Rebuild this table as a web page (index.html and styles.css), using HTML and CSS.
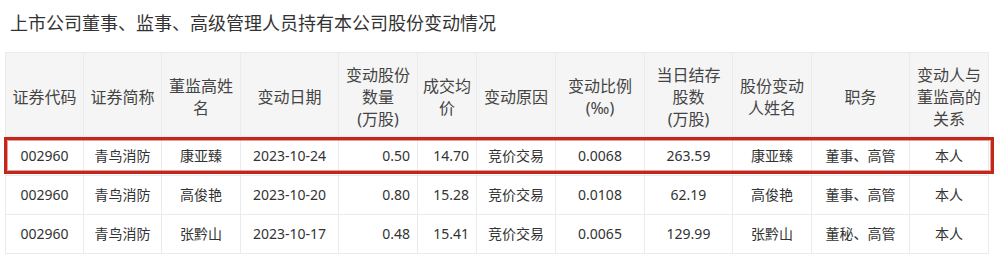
FILE: index.html
```html
<!DOCTYPE html>
<html lang="zh-CN">
<head>
<meta charset="utf-8">
<title>上市公司董事、监事、高级管理人员持有本公司股份变动情况</title>
<link rel="stylesheet" href="styles.css">
</head>
<body>
<h1 class="title">上市公司董事、监事、高级管理人员持有本公司股份变动情况</h1>
<div class="table-wrap">
  <table class="grid">
    <colgroup>
      <col style="width:78px"><col style="width:78px"><col style="width:79px"><col style="width:98px">
      <col style="width:79px"><col style="width:59px"><col style="width:79px"><col style="width:89px">
      <col style="width:88px"><col style="width:79px"><col style="width:98px"><col style="width:79px">
    </colgroup>
    <thead>
      <tr>
        <th>证券代码</th>
        <th>证券简称</th>
        <th>董监高姓<br>名</th>
        <th>变动日期</th>
        <th>变动股份<br>数量<br>(万股)</th>
        <th>成交均<br>价</th>
        <th>变动原因</th>
        <th>变动比例<br>(‰)</th>
        <th>当日结存<br>股数<br>(万股)</th>
        <th>股份变动<br>人姓名</th>
        <th>职务</th>
        <th>变动人与<br>董监高的<br>关系</th>
      </tr>
    </thead>
    <tbody>
      <tr>
        <td>002960</td><td>青鸟消防</td><td>康亚臻</td><td>2023-10-24</td>
        <td class="num">0.50</td><td class="num">14.70</td><td>竞价交易</td><td>0.0068</td>
        <td>263.59</td><td>康亚臻</td><td>董事、高管</td><td>本人</td>
      </tr>
      <tr>
        <td>002960</td><td>青鸟消防</td><td>高俊艳</td><td>2023-10-20</td>
        <td class="num">0.80</td><td class="num">15.28</td><td>竞价交易</td><td>0.0108</td>
        <td>62.19</td><td>高俊艳</td><td>董事、高管</td><td>本人</td>
      </tr>
      <tr>
        <td>002960</td><td>青鸟消防</td><td>张黔山</td><td>2023-10-17</td>
        <td class="num">0.48</td><td class="num">15.41</td><td>竞价交易</td><td>0.0065</td>
        <td>129.99</td><td>张黔山</td><td>董秘、高管</td><td>本人</td>
      </tr>
    </tbody>
  </table>
  <div class="highlight"></div>
</div>
</body>
</html>
```

FILE: styles.css
```css
html, body {
  margin: 0;
  padding: 0;
  background: #ffffff;
}

body {
  font-family: "Noto Sans", "Noto Sans CJK SC", sans-serif;
  color: #333333;
}

.title {
  margin: 0;
  padding: 11px 0 0 10px;
  height: 52px;
  box-sizing: border-box;
  font-size: 18px;
  line-height: 24px;
  font-weight: normal;
  color: #333333;
}

.table-wrap {
  position: relative;
  margin-left: 5px;
  width: 983px;
}

.grid {
  width: 983px;
  border-collapse: collapse;
  table-layout: fixed;
}

.grid th,
.grid td {
  border: 1px solid #ebebeb;
  text-align: center;
  vertical-align: middle;
}

.grid th {
  height: 84px;
  padding: 5px 4px 0;
  box-sizing: border-box;
  background: #f5f5f5;
  font-size: 16px;
  line-height: 22px;
  font-weight: normal;
  color: #444444;
}

.grid td {
  height: 39px;
  padding: 0 4px;
  box-sizing: border-box;
  font-size: 14px;
  line-height: 20px;
  color: #333333;
  white-space: nowrap;
}

.grid td.num {
  text-align: right;
  padding-right: 7px;
}

.highlight {
  position: absolute;
  left: -1px;
  top: 85px;
  width: 990px;
  height: 37px;
  box-sizing: border-box;
  border: 3px solid #c3261b;
  box-shadow: inset 0 0 0 1px rgba(195, 38, 27, 0.45);
  pointer-events: none;
}
```
